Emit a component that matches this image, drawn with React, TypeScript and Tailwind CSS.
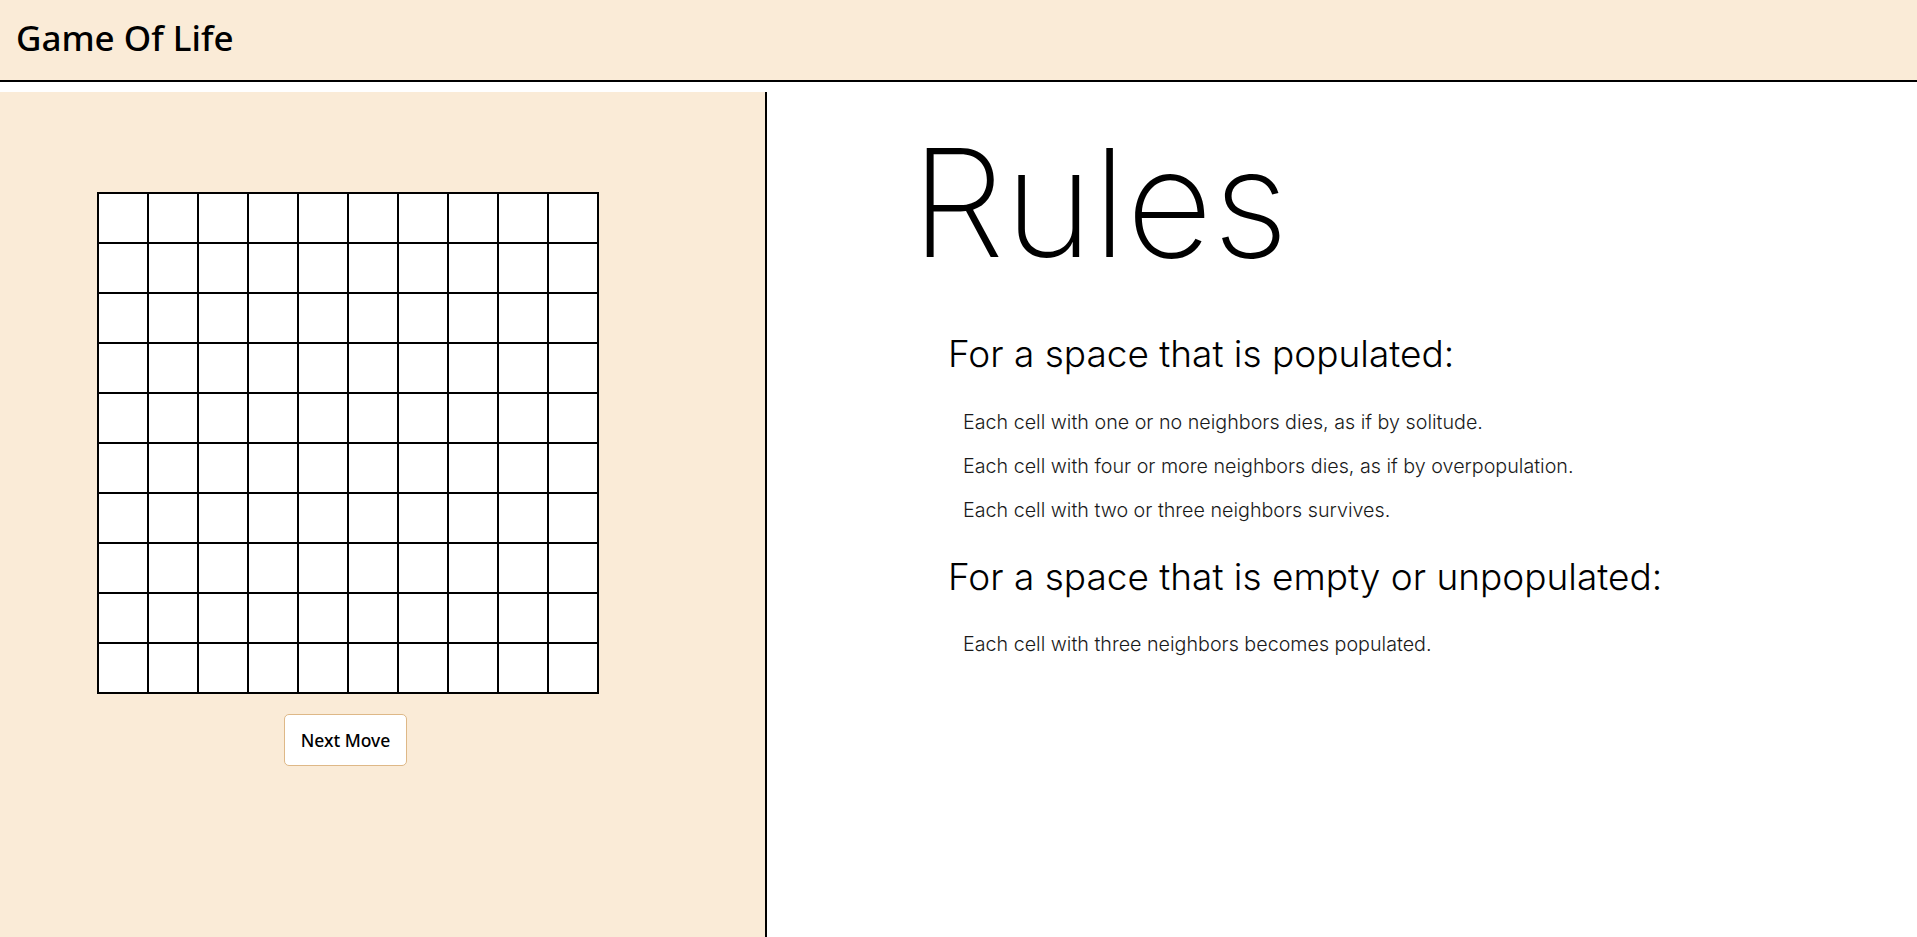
import React, { useState } from "react";

const SIZE = 10;

const emptyBoard = () =>
  Array.from({ length: SIZE }, () => Array.from({ length: SIZE }, () => false));

// one generation of Conway's rules
const step = (board: boolean[][]) =>
  board.map((row, r) =>
    row.map((alive, c) => {
      let n = 0;
      for (let dr = -1; dr <= 1; dr++) {
        for (let dc = -1; dc <= 1; dc++) {
          if (dr === 0 && dc === 0) continue;
          if (board[r + dr]?.[c + dc]) n++;
        }
      }
      return alive ? n === 2 || n === 3 : n === 3;
    })
  );

const App: React.FC = () => {
  const [board, setBoard] = useState(emptyBoard);

  const toggle = (r: number, c: number) =>
    setBoard((b) => b.map((row, i) => row.map((v, j) => (i === r && j === c ? !v : v))));

  return (
    <div className="min-h-screen bg-white text-black">
      {/* header */}
      <header className="h-[82px] bg-[#faebd7] border-b-2 border-black pl-[16px] pt-[18px]">
        <h1 className="text-[35px] leading-[39px] font-['Noto_Sans',sans-serif] font-medium">
          Game Of Life
        </h1>
      </header>

      <main className="mt-[10px] flex h-[845px]">
        {/* board */}
        <section className="w-[767px] shrink-0 bg-[#faebd7] border-r-2 border-black pl-[97px] pt-[100px]">
          <div className="w-[502px] flex flex-col">
            <div className="grid grid-cols-[repeat(10,50px)] border border-black">
              {board.map((row, r) =>
                row.map((alive, c) => (
                  <div
                    key={`${r}-${c}`}
                    onClick={() => toggle(r, c)}
                    className={`w-[50px] h-[50px] border border-black cursor-pointer ${
                      alive ? "bg-black" : "bg-white"
                    }`}
                  />
                ))
              )}
            </div>
            <button
              onClick={() => setBoard(step)}
              className="mt-[20px] ml-[187px] w-[123px] h-[52px] bg-white border border-[#deb887] rounded-[5px] text-[17.5px] font-medium font-['Noto_Sans',sans-serif]"
            >
              Next Move
            </button>
          </div>
        </section>

        {/* rules */}
        <section className="flex-1 pl-[181px] font-['Inter',sans-serif]">
          <h2 className="mt-[36px] -ml-[37px] text-[150px] leading-[150px] font-extralight">
            Rules
          </h2>

          <h3 className="mt-[57px] text-[37px] leading-[37px] font-light">
            For a space that is populated:
          </h3>
          <div className="mt-[28px] pl-[15px] text-[19.7px] leading-[44px] font-light text-[#1a1a1a]">
            <p>Each cell with one or no neighbors dies, as if by solitude.</p>
            <p>Each cell with four or more neighbors dies, as if by overpopulation.</p>
            <p>Each cell with two or three neighbors survives.</p>
          </div>

          <h3 className="mt-[26px] text-[37px] leading-[37px] font-light">
            For a space that is empty or unpopulated:
          </h3>
          <div className="mt-[27px] pl-[15px] text-[19.7px] leading-[44px] font-light text-[#1a1a1a]">
            <p>Each cell with three neighbors becomes populated.</p>
          </div>
        </section>
      </main>
    </div>
  );
};

export default App;
